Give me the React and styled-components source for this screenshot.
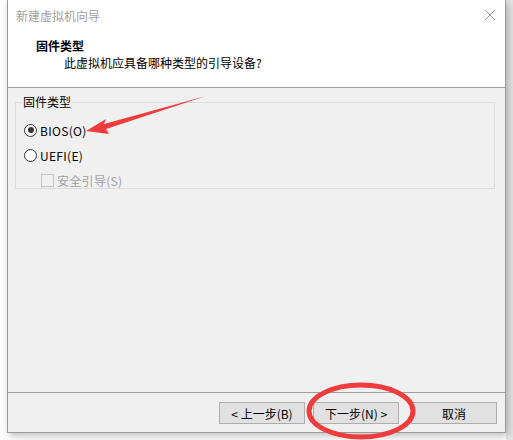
import React from 'react';
import styled, { createGlobalStyle } from 'styled-components';

const GlobalStyle = createGlobalStyle`
  html, body { margin: 0; padding: 0; background: #ffffff; }
  body { font-family: "Microsoft YaHei UI", "Noto Sans CJK SC", "Liberation Sans", sans-serif; font-size: 12px; color: #000; }
`;

const Stage = styled.div`
  position: relative;
  width: 513px;
  height: 440px;
  overflow: hidden;
  background: linear-gradient(to right, #ffffff 0, #ffffff 506px, #e4e4e4 506px);
`;

const Window = styled.div`
  margin-left: 7px;
  width: 497px;
  height: 432px;
  border: 1px solid #9a9a9a;
  border-top: none;
  background: #f0f0f0;
  display: flex;
  flex-direction: column;
  box-shadow: 2px 3px 8px rgba(0, 0, 0, 0.25);
`;

const TitleBar = styled.div`
  height: 30px;
  background: #fff;
  display: flex;
  align-items: center;
  justify-content: space-between;
  padding: 0 9px 0 8px;
`;

const Title = styled.span`
  color: #a0a0a0;
  font-size: 12px;
`;

const Header = styled.div`
  height: 58px;
  background: #fff;
  border-bottom: 1px solid #a0a0a0;
  padding: 8px 0 0 28px;
  box-sizing: border-box;
`;

const HeaderTitle = styled.div`
  font-weight: bold;
  font-size: 12px;
  line-height: 16px;
`;

const HeaderSub = styled.div`
  padding-left: 28px;
  line-height: 17px;
`;

const Body = styled.div`
  flex: 1;
  padding: 7px 10px 0 7px;
`;

const Group = styled.fieldset`
  margin: 0;
  height: 94px;
  border: 1px solid #dcdcdc;
  padding: 13px 0 0 8px;
  box-sizing: border-box;
  display: flex;
  flex-direction: column;
  gap: 9px;
`;

const Legend = styled.legend`
  padding: 0 1px;
  margin-left: -2px;
  line-height: 14px;
`;

const Option = styled.label`
  display: flex;
  align-items: center;
  gap: 3px;
  height: 16px;
  padding-left: ${p => (p.indent ? '17px' : '0')};
  color: ${p => (p.disabled ? '#a0a0a0' : '#000')};
  letter-spacing: 0.3px;
`;

const Radio = styled.span`
  width: 11px;
  height: 11px;
  border: 1px solid #333;
  border-radius: 50%;
  background: #fff;
  display: flex;
  align-items: center;
  justify-content: center;
  &::after {
    content: '';
    width: 6px;
    height: 6px;
    border-radius: 50%;
    background: ${p => (p.checked ? '#333' : 'transparent')};
  }
`;

const Check = styled.span`
  width: 11px;
  height: 11px;
  border: 1px solid #c4c4c4;
  background: #f0f0f0;
`;

const Footer = styled.div`
  height: 40px;
  border-top: 1px solid #a0a0a0;
  display: flex;
  justify-content: flex-end;
  align-items: flex-start;
  padding: 9px 8px 0 0;
  box-sizing: border-box;
`;

const Button = styled.button`
  width: 86px;
  height: 22px;
  margin-left: ${p => p.gap || 0}px;
  background: #e1e1e1;
  border: 1px solid #adadad;
  font-family: "Microsoft YaHei UI", "Noto Sans CJK SC", sans-serif;
  font-size: 12px;
  color: #000;
  padding: 0;
`;

const Mark = styled.svg`
  position: absolute;
  left: 0;
  top: 0;
  pointer-events: none;
`;

export default function App() {
  return (
    <>
      <GlobalStyle />
      <Stage>
        <Window>
          <TitleBar>
            <Title>新建虚拟机向导</Title>
            <svg width="12" height="12" viewBox="0 0 12 12">
              <path d="M1 1L11 11M11 1L1 11" stroke="#999" strokeWidth="1" />
            </svg>
          </TitleBar>
          <Header>
            <HeaderTitle>固件类型</HeaderTitle>
            <HeaderSub>此虚拟机应具备哪种类型的引导设备?</HeaderSub>
          </Header>
          <Body>
            <Group>
              <Legend>固件类型</Legend>
              <Option><Radio checked />BIOS(O)</Option>
              <Option><Radio />UEFI(E)</Option>
              <Option indent disabled><Check />安全引导(S)</Option>
            </Group>
          </Body>
          <Footer>
            <Button>&lt; 上一步(B)</Button>
            <Button gap={8}>下一步(N) &gt;</Button>
            <Button gap={12}>取消</Button>
          </Footer>
        </Window>
        <Mark width="513" height="440">
          <polygon points="206,96 104,124 106,119 86,131 109,134 106,129" fill="#f03c3c" />
          <ellipse cx="361" cy="411" rx="52" ry="26" fill="none" stroke="#f03c3c" strokeWidth="5" />
        </Mark>
      </Stage>
    </>
  );
}
